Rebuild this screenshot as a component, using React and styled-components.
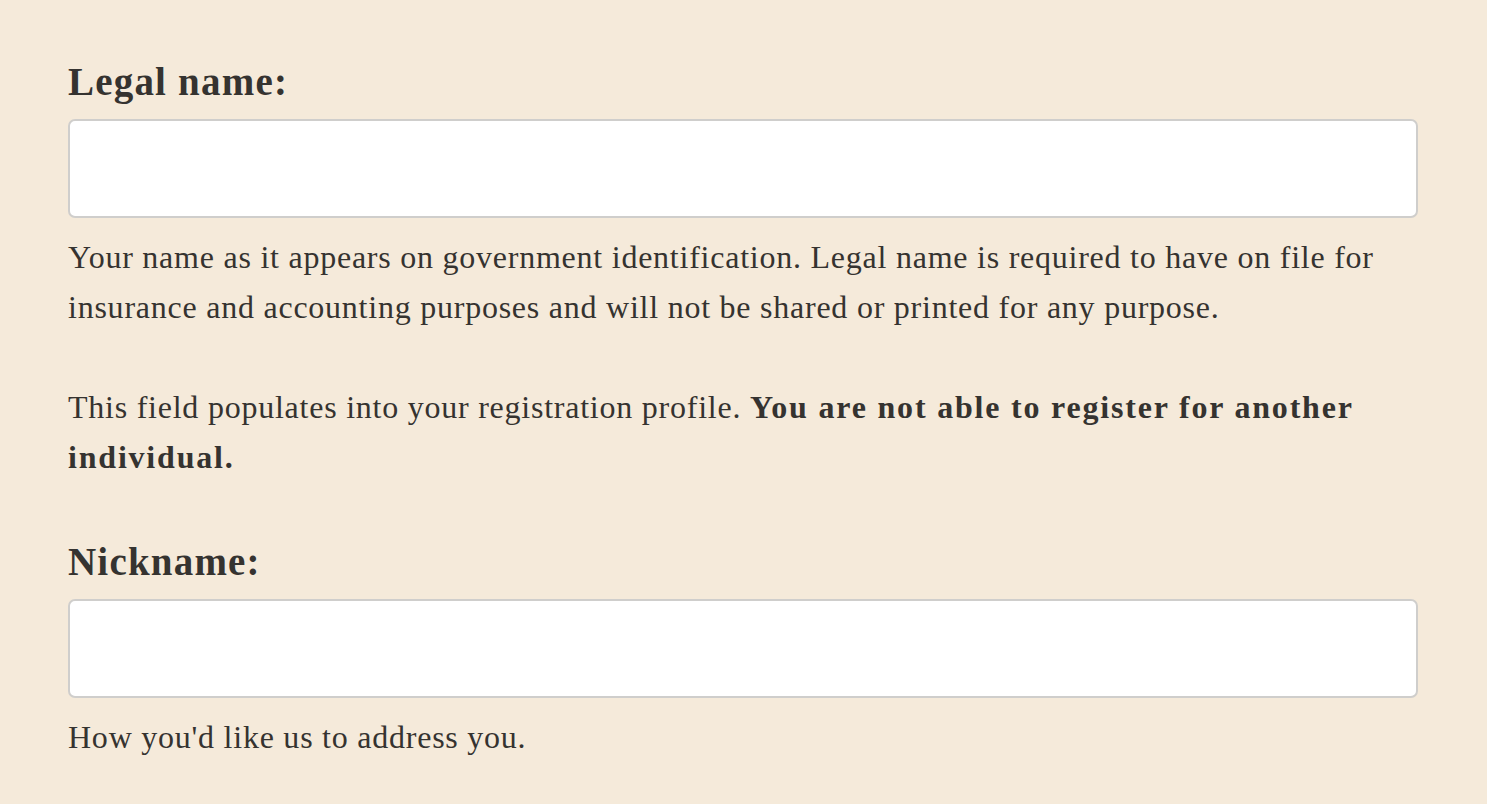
import React from 'react';
import styled, { createGlobalStyle } from 'styled-components';

const GlobalStyle = createGlobalStyle`
  html, body {
    margin: 0;
    padding: 0;
    background: #f5eada;
  }
  body {
    font-family: "Liberation Serif", "DejaVu Serif", serif;
    color: #353330;
  }
`;

const Page = styled.div`
  min-height: 804px;
  box-sizing: border-box;
  padding: 60px 69px 0 68px;
  background: #f5eada;
`;

const Field = styled.div`
  display: flex;
  flex-direction: column;
  margin-bottom: ${p => p.$gap || 0}px;
`;

const Label = styled.label`
  font-size: 39px;
  font-weight: 700;
  letter-spacing: 1.2px;
  line-height: 43px;
  margin-bottom: 16px;
  color: #353330;
`;

const Input = styled.input`
  box-sizing: border-box;
  width: 100%;
  height: 99px;
  border: 2px solid #cfcecc;
  border-radius: 7px;
  background: #fff;
  font: inherit;
  font-size: 29px;
  padding: 0 16px;
  outline: none;
`;

const Help = styled.p`
  margin: 14px 0 0;
  font-size: 32px;
  letter-spacing: 0.76px;
  line-height: 50px;
  color: #353330;

  & + & {
    margin-top: 50px;
  }
`;

const Strong = styled.strong`
  font-weight: 700;
  letter-spacing: 1.8px;
`;

export default function App() {
  return (
    <>
      <GlobalStyle />
      <Page>
        <Field $gap={58}>
          <Label htmlFor="legal">Legal name:</Label>
          <Input id="legal" type="text" />
          <Help>
            Your name as it appears on government identification. Legal name is required to have on file for
            insurance and accounting purposes and will not be shared or printed for any purpose.
          </Help>
          <Help>
            This field populates into your registration profile.{' '}
            <Strong>You are not able to register for another individual.</Strong>
          </Help>
        </Field>
        <Field>
          <Label htmlFor="nick">Nickname:</Label>
          <Input id="nick" type="text" />
          <Help>How you'd like us to address you.</Help>
        </Field>
      </Page>
    </>
  );
}
